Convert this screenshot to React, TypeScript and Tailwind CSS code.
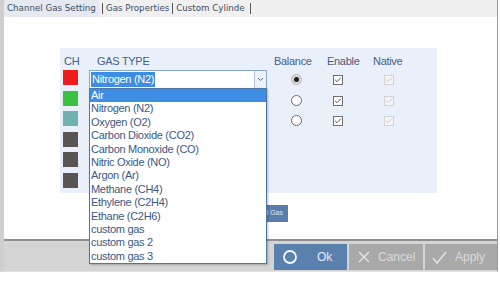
import { Check } from "lucide-react";

const gases = [
  "Air",
  "Nitrogen (N2)",
  "Oxygen (O2)",
  "Carbon Dioxide (CO2)",
  "Carbon Monoxide (CO)",
  "Nitric Oxide (NO)",
  "Argon (Ar)",
  "Methane (CH4)",
  "Ethylene (C2H4)",
  "Ethane (C2H6)",
  "custom gas",
  "custom gas 2",
  "custom gas 3",
];

const channels = [
  { color: "bg-[#ee1c1c]", active: true, balance: true },
  { color: "bg-[#3cc040]", active: true, balance: false },
  { color: "bg-[#70b2b0]", active: true, balance: false },
  { color: "bg-[#5a5453]", active: false, balance: false },
  { color: "bg-[#5a5453]", active: false, balance: false },
  { color: "bg-[#5a5453]", active: false, balance: false },
];

function Radio({ on }: { on: boolean }) {
  return on ? (
    <div className="flex h-[11px] w-[11px] items-center justify-center rounded-full border border-[#b8b8b8] bg-[#d8d8d8]">
      <div className="h-[5px] w-[5px] rounded-full bg-[#222]" />
    </div>
  ) : (
    <div className="h-[11px] w-[11px] rounded-full border border-[#6a6a6a] bg-white" />
  );
}

function Box({ dim }: { dim?: boolean }) {
  return (
    <div
      className={
        dim
          ? "flex h-[10px] w-[10px] items-center justify-center border border-[#d2d2d2] bg-[#f4f4f4] text-[#c4c4c4]"
          : "flex h-[10px] w-[10px] items-center justify-center border border-[#6e6e6e] bg-white text-[#333]"
      }
    >
      <Check size={8} strokeWidth={2.5} />
    </div>
  );
}

export default function App() {
  return (
    <div
      className="relative h-[281px] w-[500px] overflow-hidden bg-white"
      style={{ fontFamily: '"Liberation Sans", Arial, sans-serif' }}
    >
      <div className="flex h-[272px] w-[498px] flex-col border-l-4 border-r border-b border-l-[#cfcfcf] border-r-[#9a9a9a] border-b-[#e2e2e2]">
        {/* Tabs */}
        <div
          className="flex h-[17px] items-stretch bg-[#f0f0f0] text-[8.7px] text-[#3b4d66]"
          style={{ fontFamily: '"DejaVu Sans", Verdana, sans-serif' }}
        >
          <div className="flex w-[95px] items-center bg-[#e6e9ef] pl-[3px]">Channel Gas Setting</div>
          <div className="my-[3px] ml-[3px] w-px bg-[#555]" />
          <div className="flex items-center pl-[3px] pr-[3px]">Gas Properties</div>
          <div className="my-[3px] w-px bg-[#555]" />
          <div className="flex items-center pl-[3px] pr-[5px]">Custom Cylinde</div>
          <div className="my-[3px] w-px bg-[#555]" />
        </div>

        {/* Content */}
        <div className="flex flex-1 flex-col bg-white">
          <div className="ml-[56px] mt-[31px] h-[145px] w-[377px] bg-[#e9f0fa] text-[11px] tracking-[-0.3px] text-[#4a5c85]">
            <div className="flex h-[22px] items-center pt-[5px]">
              <div className="w-[29px] pl-[4px]">CH</div>
              <div className="w-[185px] pl-[8px]">GAS TYPE</div>
              <div className="w-[53px]">Balance</div>
              <div className="w-[46px]">Enable</div>
              <div>Native</div>
            </div>
            {channels.map((c, i) => (
              <div key={i} className="flex h-[20.5px] items-start">
                <div className="w-[29px] pl-[3px]">
                  <div className={`h-[15px] w-[15px] ${c.color}`} />
                </div>
                <div className="w-[178px]">
                  {i === 0 && (
                    <div className="flex h-[19px] items-stretch border border-[#8aa6c8] bg-white">
                      <div className="flex flex-1 items-center pl-[1px]">
                        <span className="bg-[#3d8de2] px-[1px] leading-[15px] text-white">Nitrogen (N2)</span>
                      </div>
                      <div className="flex w-[12px] items-center justify-center border-l border-[#b9c7d8] bg-[#eef2f7]">
                        <svg width="7" height="5" viewBox="0 0 7 5">
                          <path d="M1 1l2.5 2.5L6 1" fill="none" stroke="#667" strokeWidth="1" />
                        </svg>
                      </div>
                    </div>
                  )}
                </div>
                {c.active && (
                  <>
                    <div className="w-[24px]" />
                    <div className="mt-[4px]">
                      <Radio on={c.balance} />
                    </div>
                    <div className="w-[31px]" />
                    <div className="mt-[5px]">
                      <Box />
                    </div>
                    <div className="w-[41px]" />
                    <div className="mt-[5px]">
                      <Box dim />
                    </div>
                  </>
                )}
              </div>
            ))}
          </div>
          <div className="ml-[226px] mt-[12px] flex h-[17px] w-[58px] items-center justify-end bg-[#5a7eab] pr-[5px] text-[7px] text-[#dfe7f2]">
            Add Gas
          </div>
        </div>

        {/* Bottom bar */}
        <div className="flex h-[32px] items-start justify-end gap-[2px] border-t-2 border-[#8f8f8f] bg-[#d4d4d4] pt-[3px] text-[12px]">
          <div className="flex h-[26px] w-[73px] items-center bg-[#5a80ad] pl-[9px] text-[#e4ebf4]">
            <svg width="14" height="14" viewBox="0 0 14 14">
              <circle cx="7" cy="7" r="6" fill="none" stroke="#f4f7fb" strokeWidth="1.8" />
            </svg>
            <span className="ml-[20px]">Ok</span>
          </div>
          <div className="flex h-[26px] w-[74px] items-center bg-[#a9a9a9] pl-[9px] text-[#dadada]">
            <svg width="12" height="12" viewBox="0 0 12 12">
              <path d="M1 1l10 10M11 1L1 11" stroke="#e6e6e6" strokeWidth="1.4" />
            </svg>
            <span className="ml-[8px]">Cancel</span>
          </div>
          <div className="flex h-[26px] w-[72px] items-center bg-[#a9a9a9] pl-[7px] text-[#dadada]">
            <svg width="15" height="13" viewBox="0 0 15 13">
              <path d="M1 7l4 5L14 1" fill="none" stroke="#e6e6e6" strokeWidth="1.5" />
            </svg>
            <span className="ml-[8px]">Apply</span>
          </div>
        </div>
      </div>

      {/* Dropdown list */}
      <div className="absolute left-[89px] top-[88px] z-10 w-[178px] border border-[#4f75a3] bg-white text-[11px] tracking-[-0.3px] text-[#3a5888] shadow-[1px_1px_2px_rgba(0,0,0,0.25)]">
        {gases.map((g, i) => (
          <div
            key={g}
            className={
              i === 0
                ? "h-[13.4px] bg-[#3d8de2] pl-[1px] leading-[13.4px] text-white"
                : "h-[13.4px] pl-[1px] leading-[13.4px]"
            }
          >
            {g}
          </div>
        ))}
      </div>
    </div>
  );
}
